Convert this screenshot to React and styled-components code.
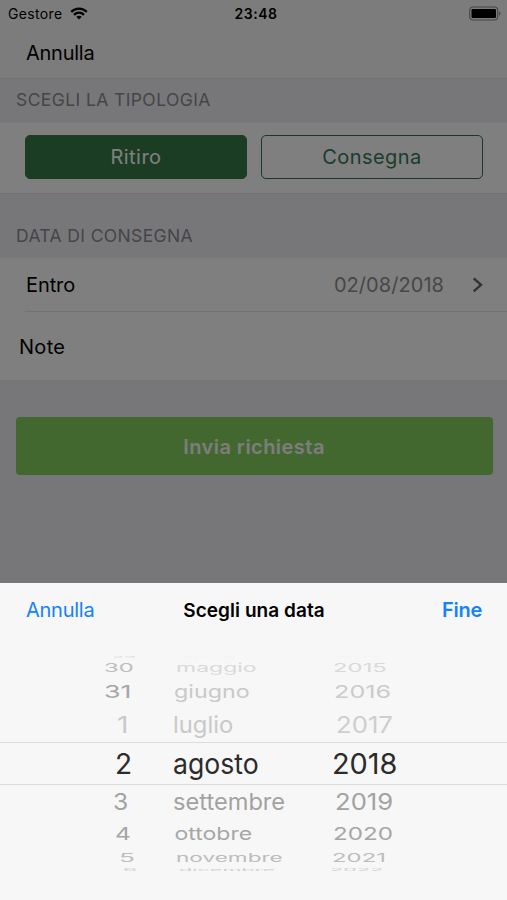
import React, { useLayoutEffect, useRef, useState } from 'react';
import styled, { createGlobalStyle } from 'styled-components';

const GlobalStyle = createGlobalStyle`
    * {
        box-sizing: border-box;
    }
    body {
        margin: 0;
        font-family: Inter, "Liberation Sans", sans-serif;
        color: #000;
        background-color: #f7f7f7;
    }
    button {
        font-family: inherit;
        padding: 0;
    }
`
const Page = styled.div`
    width: 507px;
    height: 900px;
    display: flex;
    flex-direction: column;
    overflow: hidden;
`
const Screen = styled.div`
    height: 583px;
    position: relative;
    background-color: #efeff4;
`
// dark layer over the form while the sheet is open
const Backdrop = styled.div`
    position: absolute;
    inset: 0;
    background-color: rgba(0, 0, 0, .5);
`
// Header
const Header = styled.div`
    height: 79px;
    background-color: #f8f8f8;
    border-bottom: 1px solid #e6e6e8;
`
const StatusBar = styled.div`
    height: 27px;
    padding: 0 6px 0 8px;
    display: grid;
    grid-template-columns: 1fr auto 1fr;
    align-items: center;
    font-size: 14px;
`
const Carrier = styled.div`
    display: flex;
    align-items: center;
    gap: 7px;
    letter-spacing: .35px;
`
const Clock = styled.div`
    font-weight: 600;
    letter-spacing: .5px;
    padding-left: 3px;
`
const Battery = styled.div`
    display: flex;
    justify-content: flex-end;
`
const NavButton = styled.button`
    display: block;
    height: 51px;
    margin-left: 26px;
    border: none;
    background: none;
    color: #000;
    font-size: 20px;
    letter-spacing: -.25px;
`
// Form
const SectionTitle = styled.div`
    height: ${props => props.height};
    padding: 0 0 ${props => props.bottom} 16px;
    display: flex;
    align-items: flex-end;
    font-size: 17.5px;
    line-height: 22px;
    letter-spacing: ${props => props.spacing};
    color: #8a8a8f;
`
const Group = styled.div`
    background-color: #fff;
`
const TypeRow = styled(Group)`
    height: 72px;
    padding: 12px 24px 0 25px;
    display: flex;
    gap: 14px;
    border-top: 1px solid #f6f6f8;
    border-bottom: 1px solid #e2e2e6;
`
const TypeButton = styled.button`
    flex: 1;
    height: 44px;
    border: 1.5px solid;
    border-radius: 5px;
    font-size: 20px;
    letter-spacing: .45px;
    color: ${props => props.$active ? '#fff' : '#367a5a'};
    background-color: ${props => props.$active ? '#347a46' : '#fff'};
    border-color: ${props => props.$active ? '#347a46' : '#2e7452'};
`
const DateRow = styled.div`
    height: 54px;
    margin-left: 25px;
    padding: 1px 24px 0 1px;
    display: flex;
    align-items: center;
    border-bottom: 1px solid #e6e6e8;
    font-size: 20px;
    letter-spacing: -.1px;
`
const DateValue = styled.span`
    margin-left: auto;
    margin-right: 28px;
    color: #8e8e93;
    letter-spacing: .05px;
`
const NoteRow = styled.div`
    height: 68px;
    padding: 2px 0 0 19px;
    display: flex;
    align-items: center;
    font-size: 20px;
    letter-spacing: .3px;
`
const SubmitButton = styled.button`
    display: block;
    width: 477px;
    height: 58px;
    margin: 37px 0 0 15.5px;
    padding-top: 2px;
    border: none;
    border-radius: 4px;
    background-color: #84d060;
    color: #fafafa;
    font-size: 20px;
    font-weight: 600;
    letter-spacing: .45px;
`
// Date sheet
const Sheet = styled.div`
    height: 317px;
    background-color: #f7f7f7;
`
const SheetBar = styled.div`
    height: 54px;
    padding: 0 25px 0 26px;
    display: grid;
    grid-template-columns: 1fr auto 1fr;
    align-items: center;
    font-size: 19px;
`
const SheetTitle = styled.div`
    font-weight: 600;
    letter-spacing: .05px;
`
const SheetButton = styled.button`
    border: none;
    background: none;
    color: #1583f8;
    font-size: 20px;
    letter-spacing: -.25px;
    font-weight: ${props => props.$bold ? 600 : 400};
    justify-self: ${props => props.$bold ? 'end' : 'start'};
`
const Wheels = styled.div`
    margin-top: 17px;
    display: flex;
    flex-direction: column;
`
const WheelRow = styled.div`
    height: ${props => props.$height}px;
    display: grid;
    grid-template-columns: 160px 160px 1fr;
    grid-template-rows: 100%;
    align-items: center;
    border: 0 solid #dcdcdc;
    border-width: ${props => props.$selected ? '1px 0' : 0};
    font-size: ${props => props.$selected ? 28 : 23}px;
`
const WheelCell = styled.div`
    padding-left: ${props => props.$left}px;
    color: ${props => props.$color};
    line-height: 1;
`
const WheelText = styled.span`
    display: inline-block;
    vertical-align: top;
    transform-origin: left center;
    white-space: nowrap;
`

const wheelRows = [
    { height: 7, flat: .1, items: [['29', 112, 24, '#dedede'], ['aprile', 181, 55, '#f4f4f4'], ['2014', 334, 48, '#f4f4f4']] },
    { height: 15, flat: .52, items: [['30', 104, 30, '#bdbdbd'], ['maggio', 176, 81, '#d9d9d9'], ['2015', 333, 54, '#d9d9d9']] },
    { height: 33, flat: .78, items: [['31', 104, 28, '#a6a6a6'], ['giugno', 174, 76, '#c9c9c9'], ['2016', 334, 57, '#cbcbcb']] },
    { height: 33, flat: 1, items: [['1', 117, 11, '#c9c9c9'], ['luglio', 173, 60, '#c9c9c9'], ['2017', 336, 57, '#cecece']] },
    { height: 43, flat: 1, selected: true, items: [['2', 115, 17, '#2b2b2b'], ['agosto', 172.5, 85.5, '#2b2b2b'], ['2018', 332, 65, '#2b2b2b']] },
    { height: 34, flat: 1, items: [['3', 113, 15, '#a2a2a2'], ['settembre', 173, 112, '#a2a2a2'], ['2019', 335, 58, '#a2a2a2']] },
    { height: 31, flat: .78, items: [['4', 115, 16, '#a6a6a6'], ['ottobre', 174.5, 78, '#a6a6a6'], ['2020', 332.5, 60, '#a6a6a6']] },
    { height: 16, flat: .5, items: [['5', 119, 16, '#bcbcbc'], ['novembre', 176, 107, '#bcbcbc'], ['2021', 332, 54, '#bcbcbc']] },
    { height: 8, flat: .12, items: [['6', 123, 14, '#cfcfcf'], ['dicembre', 179, 96, '#cfcfcf'], ['2022', 330, 54, '#cfcfcf']] },
]
const columnStart = [0, 160, 320];

const WheelItem = ({ text, left, width, color, flat }) => {
    const label = useRef(null);
    const [stretch, setStretch] = useState(1);

    useLayoutEffect(() => {
        setStretch(width / label.current.offsetWidth);
    }, [text, width]);

    return (
        <WheelCell $left={left} $color={color}>
            <WheelText ref={label} style={{ transform: `scale(${stretch}, ${flat})` }}>{text}</WheelText>
        </WheelCell>
    )
}

const WifiIcon = () => (
    <svg width="18" height="13" viewBox="0 0 18 13" fill="none" stroke="#000" strokeWidth="2.3">
        <path d="M1.2 4.9C5.6 .4 12.4 .4 16.8 4.9" />
        <path d="M4 7.8C6.9 5 11.1 5 14 7.8" />
        <path d="M9 12.4L6.3 9.7C7.8 8.3 10.2 8.3 11.7 9.7Z" fill="#000" stroke="none" />
    </svg>
)

const BatteryIcon = () => (
    <svg width="33" height="15" viewBox="0 0 33 15">
        <rect x="1.7" y="1" width="28" height="13" rx="3.2" fill="none" stroke="#8a8a8a" strokeWidth="1.1" />
        <rect x="3.5" y="3" width="24.5" height="9" rx="1.3" fill="#000" />
        <path d="M31.1 5.2C32.9 6 32.9 9 31.1 9.8Z" fill="#8a8a8a" />
    </svg>
)

const ChevronIcon = () => (
    <svg width="11" height="17" viewBox="0 0 11 17" fill="none" stroke="#66666a" strokeWidth="2.4">
        <path d="M1.7 1.3L9 7.8L1.7 14.3" />
    </svg>
)

const App = () => {
    return (
        <Page>
            <GlobalStyle />
            <Screen>
                <Header>
                    <StatusBar>
                        <Carrier>Gestore <WifiIcon /></Carrier>
                        <Clock>23:48</Clock>
                        <Battery><BatteryIcon /></Battery>
                    </StatusBar>
                    <NavButton>Annulla</NavButton>
                </Header>
                <SectionTitle height="43px" bottom="11px" spacing=".4px">SCEGLI LA TIPOLOGIA</SectionTitle>
                <TypeRow>
                    <TypeButton $active>Ritiro</TypeButton>
                    <TypeButton>Consegna</TypeButton>
                </TypeRow>
                <SectionTitle height="64px" bottom="11px" spacing=".37px">DATA DI CONSEGNA</SectionTitle>
                <Group>
                    <DateRow>
                        Entro
                        <DateValue>02/08/2018</DateValue>
                        <ChevronIcon />
                    </DateRow>
                    <NoteRow>Note</NoteRow>
                </Group>
                <SubmitButton>Invia richiesta</SubmitButton>
                <Backdrop />
            </Screen>
            <Sheet>
                <SheetBar>
                    <SheetButton>Annulla</SheetButton>
                    <SheetTitle>Scegli una data</SheetTitle>
                    <SheetButton $bold>Fine</SheetButton>
                </SheetBar>
                {/* day, month, year */}
                <Wheels>
                    {wheelRows.map((row, i) => (
                        <WheelRow key={i} $height={row.height} $selected={row.selected}>
                            {row.items.map(([text, left, width, color], col) => (
                                <WheelItem
                                    key={text}
                                    text={text}
                                    left={left - columnStart[col]}
                                    width={width}
                                    color={color}
                                    flat={row.flat}
                                />
                            ))}
                        </WheelRow>
                    ))}
                </Wheels>
            </Sheet>
        </Page>
    )
}

export default App;
